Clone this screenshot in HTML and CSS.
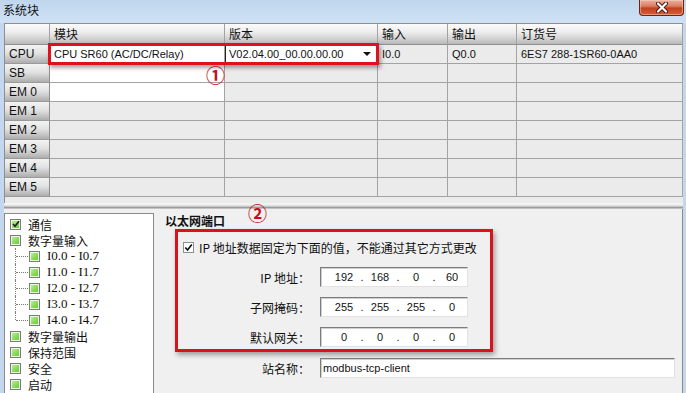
FILE: index.html
```html
<!DOCTYPE html>
<html lang="zh">
<head>
<meta charset="utf-8">
<title>系统块</title>
<link rel="stylesheet" href="styles.css">
</head>
<body>
<div class="window">
  <div class="titlebar">
    <span class="title">系统块</span>
    <button class="close" type="button" aria-label="关闭">
      <svg width="16" height="11" viewBox="0 0 16 11"><path d="M4 1.5 L12 9.5 M12 1.5 L4 9.5" stroke="#4a1810" stroke-width="4" stroke-linecap="round"/><path d="M4 1.5 L12 9.5 M12 1.5 L4 9.5" stroke="#fff" stroke-width="2.2" stroke-linecap="round"/></svg>
    </button>
  </div>
  <div class="client">
    <div class="grid">
      <div class="hc corner"></div>
      <div class="hc">模块</div>
      <div class="hc">版本</div>
      <div class="hc">输入</div>
      <div class="hc">输出</div>
      <div class="hc">订货号</div>

      <div class="rh">CPU</div>
      <div class="c w">CPU SR60 (AC/DC/Relay)</div>
      <div class="c w combo"><span class="combo-text">V02.04.00_00.00.00.00</span><span class="arrow"></span></div>
      <div class="c">I0.0</div>
      <div class="c">Q0.0</div>
      <div class="c">6ES7 288-1SR60-0AA0</div>

      <div class="rh">SB</div>
      <div class="c w"></div><div class="c"></div><div class="c"></div><div class="c"></div><div class="c"></div>

      <div class="rh">EM 0</div>
      <div class="c w"></div><div class="c"></div><div class="c"></div><div class="c"></div><div class="c"></div>

      <div class="rh">EM 1</div>
      <div class="c"></div><div class="c"></div><div class="c"></div><div class="c"></div><div class="c"></div>

      <div class="rh">EM 2</div>
      <div class="c"></div><div class="c"></div><div class="c"></div><div class="c"></div><div class="c"></div>

      <div class="rh">EM 3</div>
      <div class="c"></div><div class="c"></div><div class="c"></div><div class="c"></div><div class="c"></div>

      <div class="rh">EM 4</div>
      <div class="c"></div><div class="c"></div><div class="c"></div><div class="c"></div><div class="c"></div>

      <div class="rh">EM 5</div>
      <div class="c"></div><div class="c"></div><div class="c"></div><div class="c"></div><div class="c"></div>

      <div class="hl hl1"></div>
      <div class="mark mark1">①</div>
    </div>
    <div class="gridfill"></div>
    <div class="splitter"></div>
    <div class="pane">
      <ul class="tree">
        <li class="node"><span class="ico checked"><svg width="8" height="8" viewBox="0 0 8 8"><path d="M1 4 L3 6.3 L7 1.2" stroke="#1d1d1d" stroke-width="1.6" fill="none"/></svg></span>通信</li>
        <li class="node"><span class="ico"></span>数字量输入</li>
        <li class="node child"><span class="ico"></span><span class="lat">I0.0 - I0.7</span></li>
        <li class="node child"><span class="ico"></span><span class="lat">I1.0 - I1.7</span></li>
        <li class="node child"><span class="ico"></span><span class="lat">I2.0 - I2.7</span></li>
        <li class="node child"><span class="ico"></span><span class="lat">I3.0 - I3.7</span></li>
        <li class="node child last"><span class="ico"></span><span class="lat">I4.0 - I4.7</span></li>
        <li class="node"><span class="ico"></span>数字量输出</li>
        <li class="node"><span class="ico"></span>保持范围</li>
        <li class="node"><span class="ico"></span>安全</li>
        <li class="node"><span class="ico"></span>启动</li>
      </ul>
      <div class="props">
        <div class="heading">以太网端口</div>
        <div class="mark mark2">②</div>
        <div class="ipbox">
          <div class="fixed">
            <span class="cb"><svg width="9" height="9" viewBox="0 0 9 9"><path d="M1.3 4.5 L3.6 7 L7.8 1.6" stroke="#111" stroke-width="1.7" fill="none"/></svg></span>
            <span class="fixed-text">IP 地址数据固定为下面的值，不能通过其它方式更改</span>
          </div>
          <div class="fields">
            <div class="field">
              <span class="lbl">IP 地址：</span>
              <div class="ip"><span class="seg">192</span><span class="dot">.</span><span class="seg">168</span><span class="dot">.</span><span class="seg">0</span><span class="dot">.</span><span class="seg">60</span></div>
            </div>
            <div class="field">
              <span class="lbl">子网掩码：</span>
              <div class="ip"><span class="seg">255</span><span class="dot">.</span><span class="seg">255</span><span class="dot">.</span><span class="seg">255</span><span class="dot">.</span><span class="seg">0</span></div>
            </div>
            <div class="field">
              <span class="lbl">默认网关：</span>
              <div class="ip"><span class="seg">0</span><span class="dot">.</span><span class="seg">0</span><span class="dot">.</span><span class="seg">0</span><span class="dot">.</span><span class="seg">0</span></div>
            </div>
          </div>
        </div>
        <div class="field name-row">
          <span class="lbl lbl-wide">站名称：</span>
          <div class="text-input">modbus-tcp-client</div>
        </div>
      </div>
    </div>
  </div>
</div>
</body>
</html>
```

FILE: styles.css
```css
* { box-sizing: border-box; }

body {
  margin: 0;
  width: 686px;
  height: 393px;
  overflow: hidden;
  background: #c3d8ef;
  font-family: "Liberation Sans", "Noto Sans CJK SC", sans-serif;
  font-size: 11px;
  color: #000;
}

.window {
  height: 393px;
  display: flex;
  flex-direction: column;
}

.titlebar {
  height: 23px;
  flex: none;
  display: flex;
  justify-content: space-between;
  align-items: flex-start;
  padding: 0 2px 0 3px;
  background: linear-gradient(#c0d6ee, #cfe1f4);
}

.title {
  font-family: "Noto Sans CJK SC", sans-serif;
  font-size: 12px;
  line-height: 20px;
  color: #111;
}

.close {
  width: 45px;
  height: 16px;
  padding: 0;
  margin: 0;
  border: 1px solid #6a2416;
  border-top: none;
  border-radius: 0 0 4px 4px;
  background: linear-gradient(#eab0a0 0%, #d98065 40%, #c2401f 55%, #d5603d 100%);
  display: flex;
  align-items: center;
  justify-content: center;
  box-shadow: inset 0 0 0 1px rgba(255, 220, 200, 0.45);
}

.client {
  flex: 1;
  min-height: 0;
  margin: 0 3px 0 4px;
  display: flex;
  flex-direction: column;
  background: #f0f0f0;
}

/* ---------- module grid ---------- */
.grid {
  position: relative;
  display: grid;
  grid-template-columns: 45px 175px 153px 70px 69px 166px;
  grid-template-rows: 21px repeat(8, 19px);
  border-top: 1px solid #8e8e8e;
  border-left: 1px solid #8e8e8e;
  background: #ebebeb;
  flex: none;
}

.hc {
  font-family: "Noto Sans CJK SC", sans-serif;
  font-size: 12px;
  line-height: 19px;
  padding-left: 4px;
  border-right: 1px solid #a2a2a2;
  border-bottom: 1px solid #8f8f8f;
  background: linear-gradient(#fbfbfb 0%, #ededed 40%, #d4d4d4 72%, #b8b8b8 100%);
  color: #111;
}

.rh {
  padding-left: 4px;
  line-height: 18px;
  border-right: 1px solid #8f8f8f;
  border-bottom: 1px solid #9a9a9a;
  background: linear-gradient(#f3f3f3 0%, #e2e2e2 45%, #c6c6c6 75%, #adadad 100%);
  color: #111;
  font-size: 12px;
}

.c {
  padding-left: 4px;
  line-height: 18px;
  border-right: 1px solid #a3a3a3;
  border-bottom: 1px solid #a3a3a3;
  white-space: nowrap;
  overflow: hidden;
  color: #111;
}

.w { background: #fff; }

.combo {
  display: flex;
  align-items: center;
  justify-content: space-between;
  padding-right: 6px;
  box-shadow: inset 1px 0 0 #222;
}

.arrow {
  width: 0;
  height: 0;
  border-left: 4px solid transparent;
  border-right: 4px solid transparent;
  border-top: 4px solid #111;
}

.hl {
  position: absolute;
  border: 3px solid #e0111b;
  box-shadow: 2px 3px 4px rgba(0, 0, 0, 0.35);
  pointer-events: none;
}

.hl1 {
  left: 43px;
  top: 19px;
  width: 331px;
  height: 22px;
}

.mark {
  position: absolute;
  color: #c0121a;
  font-family: "DejaVu Serif", "Noto Sans CJK SC", serif;
  font-weight: 700;
  font-size: 19px;
  line-height: 19px;
}

.mark1 { left: 201px; top: 43px; }

.gridfill {
  height: 6px;
  flex: none;
  background: #ebebeb;
  border-left: 1px solid #8e8e8e;
}

.splitter {
  height: 6px;
  flex: none;
  background: linear-gradient(#f4f4f4 0%, #f1f1f1 30%, #cdcdcd 55%, #9c9c9c 75%, #d6d6d6 100%);
}

/* ---------- bottom pane ---------- */
.pane {
  flex: 1;
  min-height: 0;
  display: flex;
  padding-top: 4px;
  background: #f0f0f0;
  border-right: 1px solid #8a8a8a;
}

.tree {
  width: 150px;
  flex: none;
  margin: 0;
  padding: 2px 0 0 0;
  list-style: none;
  background: #fff;
  border: 1px solid #8a8a8a;
  border-bottom: none;
}

.node {
  position: relative;
  height: 16px;
  display: flex;
  align-items: center;
  padding-left: 5px;
  font-family: "Noto Sans CJK SC", sans-serif;
  font-size: 12px;
  color: #111;
}

.child { padding-left: 24px; }

.child::before {
  content: "";
  position: absolute;
  left: 10px;
  top: 0;
  height: 100%;
  border-left: 1px dotted #7a7a7a;
}

.child.last::before { height: 50%; }

.child::after {
  content: "";
  position: absolute;
  left: 11px;
  top: 8px;
  width: 12px;
  border-top: 1px dotted #7a7a7a;
}

.ico {
  width: 11px;
  height: 11px;
  flex: none;
  margin-right: 7px;
  border: 1px solid #7b7b7b;
  background: linear-gradient(135deg, #c9f2a8 0%, #86dc58 55%, #5fc634 100%);
  box-shadow: inset 0 0 0 1px #e9f7df;
  display: flex;
  align-items: center;
  justify-content: center;
}

.lat {
  font-family: "Liberation Serif", "Noto Sans CJK SC", serif;
  font-size: 13px;
}

.props {
  position: relative;
  flex: 1;
  padding-left: 11px;
}

.heading {
  font-family: "Noto Sans CJK SC", sans-serif;
  font-weight: 700;
  font-size: 12px;
  line-height: 16px;
  height: 16px;
  color: #111;
}

.mark2 { left: 94px; top: -8px; }

.ipbox {
  margin-left: 10px;
  width: 318px;
  height: 123px;
  border: 3px solid #d9121b;
  box-shadow: 2px 3px 5px rgba(0, 0, 0, 0.35);
  padding: 7px 0 0 5px;
}

.fixed {
  height: 16px;
  display: flex;
  align-items: center;
}

.cb {
  width: 11px;
  height: 11px;
  flex: none;
  margin-right: 5px;
  background: #fff;
  border: 1px solid #8e8f8f;
  display: flex;
  align-items: center;
  justify-content: center;
}

.fixed-text,
.lbl {
  font-family: "Noto Sans CJK SC", sans-serif;
  font-size: 12px;
  color: #111;
  white-space: nowrap;
}

.fields {
  margin-top: 12px;
  display: flex;
  flex-direction: column;
  gap: 10px;
}

.field {
  height: 20px;
  display: flex;
  align-items: center;
}

.lbl {
  width: 127px;
  flex: none;
  text-align: right;
  margin-right: 10px;
}

.lbl-wide { width: 145px; }

.ip,
.text-input {
  height: 20px;
  background: #fff;
  border: 1px solid;
  border-color: #7c7c7c #e2e2e2 #e2e2e2 #7c7c7c;
  box-shadow: inset 1px 1px 0 #cfcfcf;
  display: flex;
  align-items: center;
  font-size: 11px;
  color: #111;
}

.ip {
  width: 148px;
  padding-left: 9px;
}

.seg { width: 28px; text-align: center; }
.dot { width: 8px; text-align: center; }

.name-row { margin-top: 6px; }

.text-input {
  width: 355px;
  padding-left: 2px;
}
```
